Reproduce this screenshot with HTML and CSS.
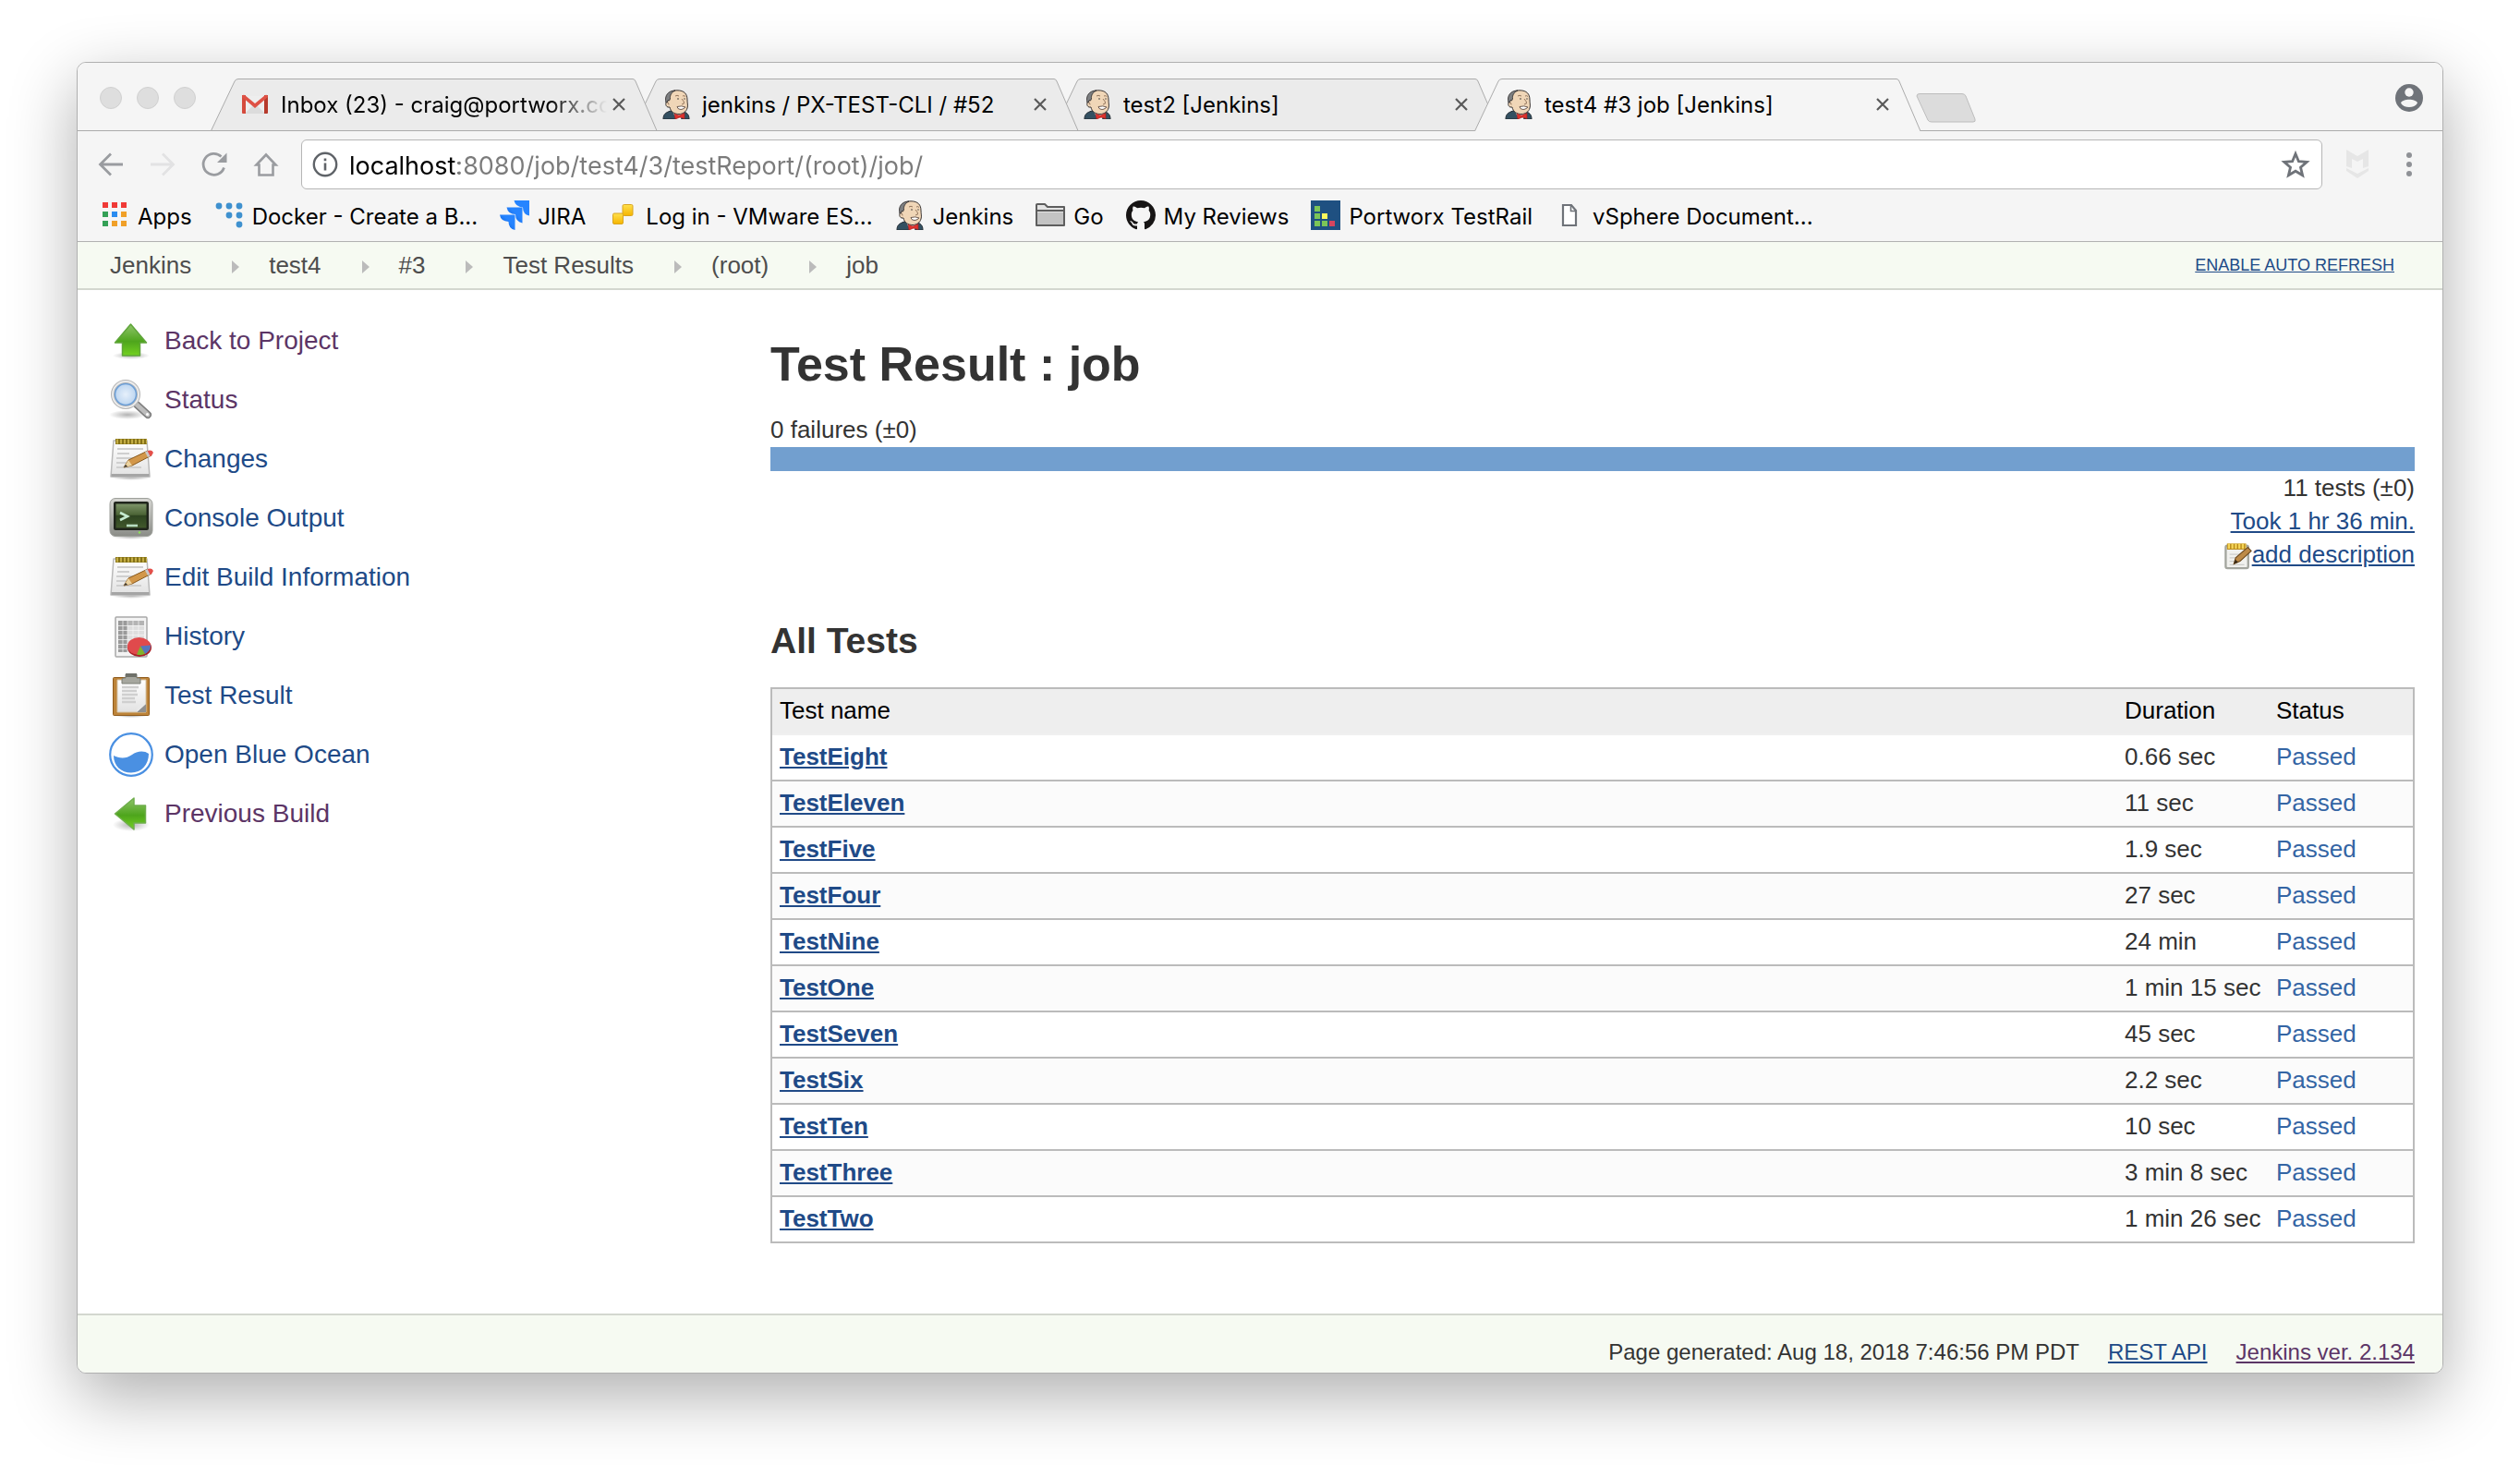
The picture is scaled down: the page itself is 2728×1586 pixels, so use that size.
FILE: index.html
```html
<!doctype html>
<html lang="en">

<head>
  <meta charset="UTF-8" />
  <meta name="viewport" content="width=device-width, initial-scale=1.0" />
  <title>test4 #3 job [Jenkins]</title>
  <link rel="stylesheet" href="styles.css">
</head>

<body>
  <!-- shared icons -->
  <svg class="defs" aria-hidden="true">
    <defs>
      <linearGradient id="green" x1="0" y1="0" x2="0" y2="1">
        <stop offset="0" stop-color="#8fc46a" />
        <stop offset=".55" stop-color="#4ea51c" />
        <stop offset="1" stop-color="#74d121" />
      </linearGradient>
      <linearGradient id="paper" x1="0" y1="0" x2="0" y2="1">
        <stop offset="0" stop-color="#fff" />
        <stop offset="1" stop-color="#e2e2e2" />
      </linearGradient>
      <linearGradient id="metal" x1="0" y1="0" x2="0" y2="1">
        <stop offset="0" stop-color="#d6d6d2" />
        <stop offset="1" stop-color="#8a8c87" />
      </linearGradient>
      <linearGradient id="screen" x1="0" y1="0" x2="0" y2="1">
        <stop offset="0" stop-color="#7d9468" />
        <stop offset=".45" stop-color="#4c6436" />
        <stop offset=".5" stop-color="#2e4420" />
        <stop offset="1" stop-color="#41582c" />
      </linearGradient>
      <radialGradient id="lens">
        <stop offset="0" stop-color="#e6f0fb" />
        <stop offset="1" stop-color="#b4d0ee" />
      </radialGradient>
      <radialGradient id="shade">
        <stop offset="0" stop-color="#000" stop-opacity=".3" />
        <stop offset="1" stop-color="#000" stop-opacity="0" />
      </radialGradient>
      <linearGradient id="jira" x1="1" y1="0" x2="0" y2="1">
        <stop offset=".4" stop-color="#2684ff" />
        <stop offset="1" stop-color="#0052cc" />
      </linearGradient>
      <linearGradient id="gold" x1="0" y1="0" x2="0" y2="1">
        <stop offset="0" stop-color="#ffe14d" />
        <stop offset="1" stop-color="#f5b400" />
      </linearGradient>
    </defs>

    <symbol id="butler" viewBox="0 0 32 32">
      <path d="M2 32C2 27 4 25 10 23H22C28 25 30 27 30 32z" fill="#335061" stroke="#222b33" stroke-width="1" />
      <path d="M12 23L16 32H21L24 24z" fill="#fff" />
      <path d="M7 19C4 18 4 13 7 12C6 5 10 .8 17 .8C25 .8 28 5 28 11C28 15 29 17 28 20C27 24 23 26.500 19 26.500C14 26.500 10 24 9 19z" fill="#f0d6b7" stroke="#3a3533" stroke-width="1" />
      <path d="M5 14C3 7 7 1 15 1C11 3 9 6 9.500 10L8.500 12L7 11.500L6.500 14z" fill="#7d7f81" stroke="#2d2a2a" stroke-width=".8" />
      <path d="M15 7Q17 5.500 19 7M23 7Q24.500 6 26 7.500M22 10Q25 13 24.500 15L22 16M6.500 14Q8 14 8 16.500" fill="none" stroke="#7b5c45" stroke-width=".8" />
      <circle cx="18" cy="10" r=".8" fill="#333" />
      <circle cx="25" cy="10" r=".7" fill="#333" />
      <path d="M17 18.500Q22 17 26 19Q22 23 18 20.500z" fill="#fff" stroke="#6d5a50" stroke-width="1" />
      <path d="M14 26L19 28L25 25.500V31.500L20 30L15 32z" fill="#e0322c" stroke="#9d2222" stroke-width=".7" />
    </symbol>

    <symbol id="close" viewBox="0 0 14 14">
      <path d="M1 1l12 12M13 1L1 13" stroke="#5a5a5a" stroke-width="2.200" />
    </symbol>

    <symbol id="arrow-up" viewBox="0 0 48 48">
      <ellipse cx="24" cy="40" rx="20" ry="4" fill="url(#shade)" />
      <path d="M23.500 6L40.500 26H33.500V40H14.500V26H6.500z" fill="url(#green)" stroke="#5fa53a" stroke-width="1.500" stroke-linejoin="round" />
    </symbol>

    <symbol id="arrow-left" viewBox="0 0 48 48">
      <ellipse cx="24" cy="36" rx="20" ry="7" fill="url(#shade)" />
      <path d="M6.500 24L27 7V15H39.500V34H27V41z" fill="url(#green)" stroke="#6fae4c" stroke-width="1.500" stroke-linejoin="round" />
    </symbol>

    <symbol id="search" viewBox="0 0 48 48">
      <ellipse cx="20" cy="40" rx="20" ry="5" fill="url(#shade)" />
      <path d="M30 29L42 40" stroke="#7e7e7e" stroke-width="8" stroke-linecap="round" />
      <path d="M30 29L42 40" stroke="#bdbdbd" stroke-width="5" stroke-linecap="round" />
      <circle cx="41.500" cy="39.500" r="1.500" fill="#fff" />
      <circle cx="18" cy="18" r="14" fill="url(#lens)" stroke="#b5b5b5" stroke-width="4" />
      <circle cx="18" cy="18" r="14" fill="none" stroke="#ececec" stroke-width="2" />
      <circle cx="18" cy="18" r="11.500" fill="none" stroke="#6d9fd6" stroke-width="1.500" />
    </symbol>

    <symbol id="notepad" viewBox="0 0 48 48">
      <ellipse cx="24" cy="44" rx="22" ry="3" fill="url(#shade)" />
      <path d="M5 4H41L44 43H2z" fill="url(#paper)" stroke="#b9b9b9" stroke-width="1.500" stroke-linejoin="round" />
      <path d="M2.500 41.500H43.500" stroke="#a5a5a5" stroke-width="3" />
      <path d="M7 5H41" stroke="#857218" stroke-width="6" />
      <path d="M8 5H41" stroke="#c4ae45" stroke-width="5" stroke-dasharray="2 2" />
      <path d="M9 13H37M9 18H22M8 23H28M8 28H20M8 33H35" stroke="#cfcfcf" stroke-width="2" />
      <path d="M16 33L21 25L42 15L46 20L25 31z" fill="#d2974a" stroke="#8a5a1d" stroke-width="1" stroke-linejoin="round" />
      <path d="M16 33L21 25L25 31z" fill="#ecd3a0" />
      <path d="M16 33L18 30L20 32z" fill="#333" />
      <path d="M41 15.500Q46 13 48 17L46 20.500L43.500 21z" fill="#e44f4a" />
      <path d="M39 16.500L41.500 15L44.500 21L42 22z" fill="#c9c9c9" />
    </symbol>

    <symbol id="terminal" viewBox="0 0 48 48">
      <ellipse cx="24" cy="44" rx="22" ry="3" fill="url(#shade)" />
      <rect x="1" y="2.500" width="46" height="41" rx="6" fill="url(#metal)" stroke="#9d9f9a" />
      <rect x="5" y="6" width="38" height="31" rx="2" fill="#20251c" />
      <rect x="7.500" y="8.500" width="33" height="26" fill="url(#screen)" />
      <path d="M12 18L20 22L12 26" fill="none" stroke="#c6ecd0" stroke-width="2.600" />
      <path d="M19 32H31" stroke="#b7dcc0" stroke-width="2.600" />
      <circle cx="33" cy="39.500" r="1.300" fill="#8de05a" />
    </symbol>

    <symbol id="graph" viewBox="0 0 48 48">
      <rect x="7" y="3" width="34" height="43" rx="1" fill="#f3f3f3" stroke="#a9a9a9" stroke-width="1.500" />
      <path d="M10 7H38V41H10z" fill="#dedede" />
      <path d="M10 7H20V41H10z" fill="#9a9a9a" />
      <path d="M20 7H38V12H20z" fill="#b4b4b4" />
      <path d="M10 12.500H38M10 17.500H38M10 22.500H38M10 27.500H38M10 32.500H38M10 37.500H38M15 7V41M20 7V41M26 7V41M32 7V41" stroke="#f8f8f8" stroke-width="1" stroke-opacity=".7" />
      <ellipse cx="33" cy="36" rx="13" ry="10" fill="#a81f24" />
      <ellipse cx="32.500" cy="34.500" rx="12.500" ry="9.500" fill="#e04a4c" />
      <path d="M34 34.500L45 33.500Q45 40 39 43z" fill="#5577bd" />
      <path d="M34 34.500L39 43Q34 45 30 43.500z" fill="#7fb32d" />
    </symbol>

    <symbol id="clipboard" viewBox="0 0 48 48">
      <ellipse cx="24" cy="46" rx="18" ry="2" fill="url(#shade)" />
      <rect x="4.500" y="4.500" width="39" height="41" rx="1" fill="#bd843a" stroke="#8f5a1b" stroke-width="1" />
      <path d="M9 7H40V42H9z" fill="url(#paper)" stroke="#d6c5a8" stroke-width="1" />
      <path d="M14 15H32M14 19H30M14 23H31M14 27H28M14 31H29" stroke="#cfcfcf" stroke-width="2.500" />
      <path d="M40 33V42H30z" fill="#8f8f8f" />
      <path d="M30 42L31 34L40 33z" fill="#e8e8e8" />
      <path d="M18 1H30V5H33Q34 5 34 7V11H14V7Q14 5 16 5H18z" fill="#a6a79f" stroke="#7c7e76" stroke-width="1" />
      <path d="M18 0H30V4H18z" fill="#6f716a" />
    </symbol>

    <symbol id="ocean" viewBox="0 0 48 48">
      <circle cx="24" cy="24" r="22.800" fill="#fff" stroke="#4a90e2" stroke-width="2.200" />
      <path d="M5 25C11 28 18 29 25 24C30 20 38 19 43 23C43 35 35 43.500 24 43.500C13 43.500 5 36 5 25z" fill="#4a90e2" />
    </symbol>
  </svg>

  <div class="window">
    <div class="tab-strip">
      <div class="lights">
        <i class="light"></i>
        <i class="light"></i>
        <i class="light"></i>
      </div>
      <div class="tabs">
        <div class="tab">
          <svg class="tab-shape" viewBox="0 0 484 57" preserveAspectRatio="none">
            <path d="M.5 56.500L26 3Q27 .5 30 .5H457Q459 .5 460 3L483 56.500z" />
          </svg>
          <svg class="icon" viewBox="0 0 32 32">
            <path d="M3 7H29V26H3z" fill="#eee" />
            <path d="M5 26L16 15L27 26z" fill="#dcdcdc" />
            <path d="M2 6H6V26H3Q2 26 2 25z" fill="#d54b3d" />
            <path d="M30 6H26V26H29Q30 26 30 25z" fill="#b63a2c" />
            <path d="M2 8Q2 5 5 6L16 15L27 6Q30 5 30 8L16 20z" fill="#de5145" />
          </svg>
          <span class="tab-title tab-fade">Inbox (23) - craig@portworx.co</span>
          <button class="tab-close" aria-label="Close tab"><svg viewBox="0 0 14 14"><use href="#close" /></svg></button>
        </div>
        <div class="tab">
          <svg class="tab-shape" viewBox="0 0 484 57" preserveAspectRatio="none">
            <path d="M.5 56.500L26 3Q27 .5 30 .5H457Q459 .5 460 3L483 56.500z" />
          </svg>
          <svg class="icon"><use href="#butler" /></svg>
          <span class="tab-title">jenkins / PX-TEST-CLI / #52</span>
          <button class="tab-close" aria-label="Close tab"><svg viewBox="0 0 14 14"><use href="#close" /></svg></button>
        </div>
        <div class="tab">
          <svg class="tab-shape" viewBox="0 0 484 57" preserveAspectRatio="none">
            <path d="M.5 56.500L26 3Q27 .5 30 .5H457Q459 .5 460 3L483 56.500z" />
          </svg>
          <svg class="icon"><use href="#butler" /></svg>
          <span class="tab-title">test2 [Jenkins]</span>
          <button class="tab-close" aria-label="Close tab"><svg viewBox="0 0 14 14"><use href="#close" /></svg></button>
        </div>
        <div class="tab active">
          <svg class="tab-shape" viewBox="0 0 484 57" preserveAspectRatio="none">
            <path d="M.5 57L26 3Q27 .5 30 .5H457Q459 .5 460 3L483 57" />
          </svg>
          <svg class="icon"><use href="#butler" /></svg>
          <span class="tab-title">test4 #3 job [Jenkins]</span>
          <button class="tab-close" aria-label="Close tab"><svg viewBox="0 0 14 14"><use href="#close" /></svg></button>
        </div>
      </div>
      <button class="new-tab" aria-label="New tab">
        <svg viewBox="0 0 66 32">
          <path d="M4 .5H50Q53 .5 54 3L64 28Q65 31 62 31H17Q14 31 13 29L1 3Q1 .5 4 .5z" fill="#dcdcdc" stroke="#bdbdbd" />
        </svg>
      </button>
      <button class="profile" aria-label="Profile">
        <svg viewBox="0 0 30 30">
          <circle cx="15" cy="15" r="15" fill="#6f7379" />
          <circle cx="15" cy="9" r="4.700" fill="#f5f5f5" />
          <path d="M6 20.500C8 15.500 22 15.500 24 20.500C21 26.500 9 26.500 6 20.500z" fill="#f5f5f5" />
        </svg>
      </button>
    </div>

    <div class="toolbar">
      <button class="nav-btn" aria-label="Back">
        <svg viewBox="0 0 32 32"><path d="M29 16H5M16 4.500L4.500 16L16 27.500" fill="none" stroke="#9a9ca0" stroke-width="2.800" /></svg>
      </button>
      <button class="nav-btn" aria-label="Forward">
        <svg viewBox="0 0 32 32"><path d="M3 16H27M16 4.500L27.500 16L16 27.500" fill="none" stroke="#e2e2e3" stroke-width="2.800" /></svg>
      </button>
      <button class="nav-btn" aria-label="Reload">
        <svg viewBox="0 0 32 32">
          <path d="M26.500 19.500A11.500 11.500 0 1 1 23.500 7.500" fill="none" stroke="#9a9ca0" stroke-width="2.800" />
          <path d="M29.500 3.500V14H19z" fill="#9a9ca0" />
        </svg>
      </button>
      <button class="nav-btn" aria-label="Home">
        <svg viewBox="0 0 32 32"><path d="M16 5.500L5.500 16.500H8.500V27.500H23.500V16.500H26.500z" fill="none" stroke="#9a9ca0" stroke-width="2.600" /></svg>
      </button>
      <div class="omnibox">
        <svg class="info" viewBox="0 0 28 28">
          <circle cx="14" cy="14" r="12.200" fill="none" stroke="#5f6368" stroke-width="2.400" />
          <path d="M12.700 12.500H15.300V20.500H12.700zM12.700 7.500H15.300V10.200H12.700z" fill="#5f6368" />
        </svg>
        <input class="url" type="text" aria-label="Address" value="localhost:8080/job/test4/3/testReport/(root)/job/" />
        <button class="nav-btn" aria-label="Bookmark this page">
          <svg viewBox="0 0 32 32"><path d="M16 4.500L19.400 12.700L28.200 13.400L21.500 19.200L23.600 27.800L16 23.200L8.400 27.800L10.500 19.200L3.800 13.400L12.600 12.700z" fill="none" stroke="#6f7379" stroke-width="2.800" /></svg>
        </button>
      </div>
      <button class="nav-btn" aria-label="Extension">
        <svg viewBox="0 0 32 32">
          <path d="M4 0L16 7L28 0V18L22 20V10L16 13L10 10V20L4 18z" fill="#e6e6e6" />
          <path d="M4 20L16 26L28 20V23L16 31L4 23z" fill="#e6e6e6" />
        </svg>
      </button>
      <button class="nav-btn" aria-label="Menu">
        <svg viewBox="0 0 32 32" fill="#8f9196">
          <circle cx="16" cy="6" r="3" />
          <circle cx="16" cy="16" r="3" />
          <circle cx="16" cy="26" r="3" />
        </svg>
      </button>
    </div>

    <div class="bookmarks">
      <a class="bookmark" href="#">
        <svg class="icon" viewBox="0 0 32 32">
          <path d="M3 2h6v6h-6zM13 2h6v6h-6zM23 2h6v6h-6z" fill="#f03a37" />
          <path d="M3 12h6v6h-6zM3 22h6v6h-6z" fill="#34a056" />
          <path d="M13 12h6v6h-6z" fill="#2a8cf0" />
          <path d="M23 12h6v6h-6zM13 22h6v6h-6zM23 22h6v6h-6z" fill="#f0a028" />
        </svg>
        <span>Apps</span>
      </a>
      <a class="bookmark" href="#">
        <svg class="icon" viewBox="0 0 32 32" fill="#3f91cf">
          <circle cx="5" cy="6" r="3.400" /><circle cx="16" cy="6" r="3.400" /><circle cx="27" cy="6" r="3.400" />
          <circle cx="16" cy="16" r="3.400" /><circle cx="27" cy="16" r="3.400" />
          <circle cx="27" cy="26" r="3.400" />
        </svg>
        <span>Docker - Create a B...</span>
      </a>
      <a class="bookmark" href="#">
        <svg class="icon" viewBox="0 0 32 32">
          <path d="M15.500 0H32V16.500Q25 15 25 7.500Q17 7 15.500 0z" fill="#2684ff" />
          <path d="M7.500 7.500H24.500V24.500Q17 23 17 15Q9 15 7.500 7.500z" fill="url(#jira)" />
          <path d="M0 15.500H16.500V32Q9.500 30.500 9.500 23Q1 22.500 0 15.500z" fill="url(#jira)" />
        </svg>
        <span>JIRA</span>
      </a>
      <a class="bookmark" href="#">
        <svg class="icon" viewBox="0 0 32 32" fill="url(#gold)" stroke="#d9a520">
          <rect x="16" y="4.500" width="11" height="12" rx="1.500" />
          <rect x="5.500" y="14" width="11" height="11.500" rx="1.500" />
        </svg>
        <span>Log in - VMware ES...</span>
      </a>
      <a class="bookmark" href="#">
        <svg class="icon"><use href="#butler" /></svg>
        <span>Jenkins</span>
      </a>
      <a class="bookmark" href="#">
        <svg class="icon" viewBox="0 0 32 32">
          <path d="M1 27V4.500Q1 4 2 4H10L13 7H31V27z" fill="#e4e4e4" stroke="#5e5e5e" stroke-width="2" stroke-linejoin="round" />
          <path d="M2 13H30V26H2z" fill="#c3c3c3" />
          <path d="M1 11H31" stroke="#5e5e5e" stroke-width="2" />
        </svg>
        <span>Go</span>
      </a>
      <a class="bookmark" href="#">
        <svg class="icon" viewBox="0 0 16 16">
          <path fill="#171515" d="M8 0C3.580 0 0 3.580 0 8c0 3.540 2.290 6.530 5.470 7.590.4.070.55-.17.55-.38 0-.19-.01-.82-.01-1.490-2.010.37-2.530-.49-2.690-.94-.09-.23-.48-.94-.82-1.130-.28-.15-.68-.52-.01-.53.63-.01 1.080.58 1.230.82.72 1.210 1.870.87 2.330.66.07-.52.28-.87.51-1.070-1.780-.2-3.640-.89-3.640-3.950 0-.87.31-1.590.82-2.150-.08-.2-.36-1.020.08-2.120 0 0 .67-.21 2.200.82.64-.18 1.320-.27 2-.27s1.360.09 2 .27c1.530-1.040 2.200-.82 2.200-.82.44 1.100.16 1.920.08 2.120.51.56.82 1.270.82 2.150 0 3.070-1.870 3.750-3.650 3.950.29.25.54.73.54 1.480 0 1.070-.01 1.930-.01 2.200 0 .21.15.46.55.38A8.010 8.010 0 0 0 16 8c0-4.420-3.580-8-8-8z" />
        </svg>
        <span>My Reviews</span>
      </a>
      <a class="bookmark" href="#">
        <svg class="icon" viewBox="0 0 32 32">
          <path d="M0 0h32v32H0z" fill="#1f5081" />
          <path d="M4 6h6v6H4zM4 14h6v6H4zM4 22h6v6H4zM12 22h6v6h-6z" fill="#7cc557" />
          <path d="M12 14h6v6h-6z" fill="#fdf75d" />
          <path d="M20 22h6v6h-6z" fill="#d6455f" />
        </svg>
        <span>Portworx TestRail</span>
      </a>
      <a class="bookmark" href="#">
        <svg class="icon" viewBox="0 0 32 32">
          <path d="M9 5H18L23 11V27H9z" fill="#fff" stroke="#6f7379" stroke-width="2.200" />
          <path d="M17.500 5V11.500H23" fill="none" stroke="#6f7379" stroke-width="1.600" />
        </svg>
        <span>vSphere Document...</span>
      </a>
    </div>

    <nav class="breadcrumbs">
      <ul class="crumbs">
        <li><a href="#">Jenkins</a></li>
        <li><a href="#">test4</a></li>
        <li><a href="#">#3</a></li>
        <li><a href="#">Test Results</a></li>
        <li><a href="#">(root)</a></li>
        <li><a href="#">job</a></li>
      </ul>
      <a class="auto-refresh" href="#">ENABLE AUTO REFRESH</a>
    </nav>

    <div class="page">
      <div class="side-panel">
        <a class="task visited" href="#"><svg><use href="#arrow-up" /></svg>Back to Project</a>
        <a class="task visited" href="#"><svg><use href="#search" /></svg>Status</a>
        <a class="task" href="#"><svg><use href="#notepad" /></svg>Changes</a>
        <a class="task" href="#"><svg><use href="#terminal" /></svg>Console Output</a>
        <a class="task" href="#"><svg><use href="#notepad" /></svg>Edit Build Information</a>
        <a class="task" href="#"><svg><use href="#graph" /></svg>History</a>
        <a class="task" href="#"><svg><use href="#clipboard" /></svg>Test Result</a>
        <a class="task" href="#"><svg><use href="#ocean" /></svg>Open Blue Ocean</a>
        <a class="task visited" href="#"><svg><use href="#arrow-left" /></svg>Previous Build</a>
      </div>

      <div class="main-panel">
        <h1>Test Result : job</h1>
        <div class="failures">0 failures (±0)</div>
        <div class="result-bar"></div>
        <div class="summary">
          <div>11 tests (±0)</div>
          <div><a href="#">Took 1 hr 36 min.</a></div>
          <div class="description">
            <svg class="note" viewBox="0 0 32 32">
              <rect x="1.500" y="4" width="26" height="26" rx="2" fill="#f1f1ee" stroke="#a4a69f" stroke-width="2.500" />
              <path d="M6 14H20M6 18H16M6 22H13M6 26H23" stroke="#cdcdcb" stroke-width="1.500" />
              <path d="M3 5H25" stroke="#b8891a" stroke-width="7" />
              <path d="M4 4.500H25" stroke="#f5d65a" stroke-width="6" stroke-dasharray="2.500 1.500" />
              <path d="M11 25L13 18L27 6L31 10L18 22z" fill="#bd8a48" stroke="#6e4a1e" stroke-width="1.200" />
              <path d="M11 25L12.500 20L16 23z" fill="#3a2a17" />
            </svg><a href="#">add description</a>
          </div>
        </div>

        <h2>All Tests</h2>
        <table class="tests">
          <thead>
            <tr>
              <th>Test name</th>
              <th class="col-duration">Duration</th>
              <th class="col-status">Status</th>
            </tr>
          </thead>
          <tbody>
            <tr><td><a href="#">TestEight</a></td><td>0.66 sec</td><td class="passed">Passed</td></tr>
            <tr><td><a href="#">TestEleven</a></td><td>11 sec</td><td class="passed">Passed</td></tr>
            <tr><td><a href="#">TestFive</a></td><td>1.9 sec</td><td class="passed">Passed</td></tr>
            <tr><td><a href="#">TestFour</a></td><td>27 sec</td><td class="passed">Passed</td></tr>
            <tr><td><a href="#">TestNine</a></td><td>24 min</td><td class="passed">Passed</td></tr>
            <tr><td><a href="#">TestOne</a></td><td>1 min 15 sec</td><td class="passed">Passed</td></tr>
            <tr><td><a href="#">TestSeven</a></td><td>45 sec</td><td class="passed">Passed</td></tr>
            <tr><td><a href="#">TestSix</a></td><td>2.2 sec</td><td class="passed">Passed</td></tr>
            <tr><td><a href="#">TestTen</a></td><td>10 sec</td><td class="passed">Passed</td></tr>
            <tr><td><a href="#">TestThree</a></td><td>3 min 8 sec</td><td class="passed">Passed</td></tr>
            <tr><td><a href="#">TestTwo</a></td><td>1 min 26 sec</td><td class="passed">Passed</td></tr>
          </tbody>
        </table>
      </div>
    </div>

    <footer class="footer">
      <span>Page generated: Aug 18, 2018 7:46:56 PM PDT</span>
      <a href="#">REST API</a>
      <a class="visited" href="#">Jenkins ver. 2.134</a>
    </footer>
  </div>
</body>

</html>
```
FILE: styles.css
```css
* {
  box-sizing: border-box;
}

body {
  margin: 0;
  padding: 67px 83px 99px;
  background: #fff;
  color: #333;
  font-family: "Liberation Sans", Arial, sans-serif;
  font-size: 26px;
}

a {
  color: #204a87;
}

a.visited {
  color: #5c3566;
}

button {
  padding: 0;
  border: 0;
  background: none;
}

svg {
  display: block;
  flex: none;
}

.defs {
  position: absolute;
  width: 0;
  height: 0;
}

.window {
  border: 1px solid #b0b0b0;
  border-radius: 10px;
  background: #fff;
  box-shadow: 0 24px 72px rgba(0, 0, 0, 0.32);
  overflow: hidden;
}

/* browser chrome */

.tab-strip,
.toolbar,
.bookmarks {
  display: flex;
  background: #f5f5f5;
  font-family: Inter, sans-serif;
  font-size: 24px;
}

.tab-strip {
  padding: 17px 21px 0 24px;
  border-bottom: 1px solid #ababab;
}

.lights {
  display: flex;
  align-items: center;
  gap: 16px;
  height: 42px;
  margin-right: 16px;
}

.light {
  width: 24px;
  height: 24px;
  border: 1px solid #d0d0d0;
  border-radius: 50%;
  background: #dedede;
}

.tabs {
  display: flex;
  min-width: 0;
}

.tab {
  position: relative;
  display: flex;
  align-items: center;
  width: 484px;
  height: 56px;
  margin-right: -28px;
  padding: 0 35px 0 32px;
}

.tab:nth-child(1) {
  z-index: 3;
}

.tab:nth-child(2) {
  z-index: 2;
}

.tab:nth-child(3) {
  z-index: 1;
}

.tab.active {
  z-index: 4;
}

.tab-shape {
  position: absolute;
  top: 0;
  left: 0;
  z-index: -1;
  width: 100%;
  height: 57px;
  fill: #ebebeb;
  stroke: #ababab;
}

.active .tab-shape {
  fill: #f5f5f5;
}

.icon {
  width: 32px;
  height: 32px;
}

.tab-title {
  flex: 1;
  min-width: 0;
  margin: 0 6px 0 12px;
  padding-top: 1px;
  color: #000;
  white-space: nowrap;
  overflow: hidden;
}

.tab-fade {
  -webkit-mask-image: linear-gradient(90deg, #000 82%, transparent);
  mask-image: linear-gradient(90deg, #000 82%, transparent);
}

.tab-close svg {
  width: 14px;
  height: 14px;
}

.new-tab {
  align-self: flex-start;
  margin: 16px auto 0 22px;
}

.new-tab svg {
  width: 66px;
  height: 32px;
}

.profile {
  height: 42px;
}

.profile svg {
  width: 30px;
  height: 30px;
}

.toolbar {
  align-items: center;
  gap: 24px;
  padding: 9px 20px 0;
}

.nav-btn svg {
  width: 32px;
  height: 32px;
}

.omnibox {
  display: flex;
  flex: 1;
  align-items: center;
  height: 54px;
  margin: 0 -2px;
  padding: 0 12px 0 11px;
  border: 1px solid #b6b6b6;
  border-radius: 6px;
  background: #fff;
}

.info {
  width: 28px;
  height: 28px;
}

/* host is black, the rest of the address is grey */
.url {
  flex: 1;
  height: 40px;
  margin: 0 12px;
  padding: 2px 0 0;
  border: 0;
  background: linear-gradient(90deg, #000 118px, #7b7b7b 118px);
  -webkit-background-clip: text;
  background-clip: text;
  color: transparent;
  font: 27px Inter, sans-serif;
}

.bookmarks {
  gap: 24px;
  height: 57px;
  padding: 0 24px;
  border-bottom: 1px solid #b2b2b2;
}

.bookmark {
  display: flex;
  align-items: center;
  gap: 9px;
  color: #000;
  text-decoration: none;
  white-space: nowrap;
}

.bookmark span {
  padding-top: 2px;
}

/* jenkins page */

.breadcrumbs {
  display: flex;
  align-items: center;
  justify-content: space-between;
  height: 52px;
  padding: 1px 52px 0 35px;
  border-bottom: 2px solid #d3d7cf;
  background: #f6faf2;
}

.crumbs {
  display: flex;
  margin: 0;
  padding: 0;
  list-style: none;
}

.crumbs li {
  display: flex;
  align-items: center;
}

.crumbs li + li::before {
  content: "";
  margin: 2px 32px 0 44px;
  border-style: solid;
  border-width: 7px 0 7px 8px;
  border-color: transparent transparent transparent #bbb;
}

.crumbs a {
  color: #4d4d4d;
  text-decoration: none;
}

.auto-refresh {
  font-size: 18px;
}

.page {
  display: flex;
}

.side-panel {
  display: flex;
  flex: none;
  flex-direction: column;
  gap: 16px;
  width: 750px;
  padding: 31px 34px;
}

.task {
  display: flex;
  align-items: center;
  gap: 12px;
  height: 48px;
  font-size: 28px;
  text-decoration: none;
}

.task svg {
  width: 48px;
  height: 48px;
}

.main-panel {
  flex: 1;
  padding: 50px 30px 76px 0;
}

h1 {
  margin: 0 0 23px;
  font-size: 52px;
  line-height: 60px;
}

h2 {
  margin: 54px 0 28px;
  font-size: 39px;
  line-height: 44px;
}

.failures,
.summary {
  line-height: 36px;
}

.result-bar {
  height: 26px;
  margin-top: 1px;
  background: #729fcf;
}

.summary {
  text-align: right;
}

.description {
  display: flex;
  justify-content: flex-end;
}

.note {
  width: 30px;
  height: 32px;
  margin-top: 4px;
}

.tests {
  width: 100%;
  border: 2px solid #bbb;
  border-width: 2px 2px 0;
  border-spacing: 0;
}

.tests th,
.tests td {
  height: 50px;
  padding: 8px 8px 10px;
  border-bottom: 2px solid #bbb;
  line-height: 30px;
  text-align: left;
  white-space: nowrap;
}

.tests th {
  border-color: #f0f0f0;
  background: #eee;
  color: #000;
  font-weight: normal;
}

.tests tr:nth-child(even) td {
  background: #fbfbfb;
}

.tests td a {
  font-weight: bold;
}

.tests .col-duration {
  width: 164px;
}

.tests .col-status {
  width: 156px;
}

.tests .passed {
  color: #3465a4;
}

.footer {
  display: flex;
  justify-content: flex-end;
  gap: 31px;
  padding: 26px 30px 8px;
  border-top: 2px solid #d3d7cf;
  background: #f6faf2;
  font-size: 24px;
  line-height: 28px;
}
```
